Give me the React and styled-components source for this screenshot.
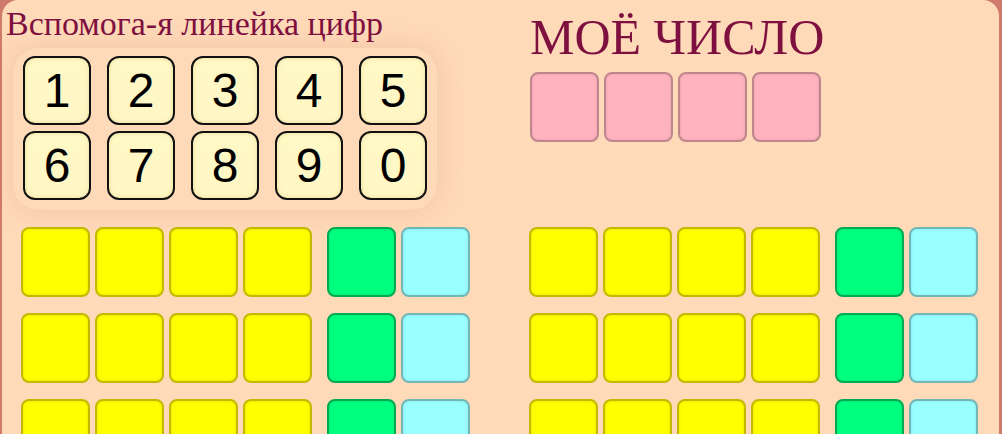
import React from 'react';
import styled, { createGlobalStyle } from 'styled-components';

const GlobalStyle = createGlobalStyle`
  html, body {
    margin: 0;
    padding: 0;
    background: #cf7a6c;
    overflow: hidden;
  }
`;

const Panel = styled.div`
  margin: 0 3px 0 2px;
  min-height: 520px;
  background: #ffdab9;
  border-radius: 16px;
  font-family: 'Liberation Serif', 'Times New Roman', serif;
`;

const Top = styled.div`
  display: flex;
  height: 227px;
`;

const LeftCol = styled.div`
  width: 524px;
  padding-left: 4px;
`;

const RightCol = styled.div`
  flex: 1;
`;

const Title = styled.h1`
  margin: 0;
  font-weight: normal;
  color: #7e1040;
  font-size: ${p => p.size}px;
  line-height: ${p => Math.round(p.size * 1.107)}px;
  padding-top: ${p => p.top}px;
  white-space: nowrap;
`;

const KeyPad = styled.div`
  display: grid;
  grid-template-columns: repeat(5, 68px);
  column-gap: 16px;
  row-gap: 6px;
  width: max-content;
  margin: 5px 0 0 7px;
  padding: 8px 10px 10px 10px;
  border-radius: 26px;
  box-shadow: 0 0 28px 2px rgba(185, 115, 75, 0.17);
`;

const Key = styled.div`
  height: 69px;
  box-sizing: border-box;
  display: flex;
  align-items: center;
  justify-content: center;
  border: 2px solid #111;
  border-radius: 12px;
  background: linear-gradient(#fff9c6, #fff6c4);
  box-shadow: inset 0 0 4px rgba(200, 170, 80, 0.35);
  font-family: 'Liberation Sans', Arial, sans-serif;
  font-size: 48px;
  color: #000;
`;

const Slots = styled.div`
  display: flex;
  gap: 5px;
  margin-top: 7px;
`;

const Cell = styled.div`
  width: 69px;
  height: 70px;
  box-sizing: border-box;
  border-radius: 8px;
  background: ${p => p.color};
  border: 2px solid ${p => p.edge};
  box-shadow: inset 0 0 3px rgba(0, 0, 0, 0.12);
`;

const Board = styled.div`
  display: flex;
  gap: 59px;
  padding-left: 19px;
`;

const Rows = styled.div`
  display: flex;
  flex-direction: column;
  gap: 16px;
`;

const Row = styled.div`
  display: flex;
  gap: 15px;
`;

const Group = styled.div`
  display: flex;
  gap: 5px;
`;

const YELLOW = { color: '#ffff00', edge: '#c6b800' };
const GREEN = { color: '#00ff7f', edge: '#00a952' };
const CYAN = { color: '#99ffff', edge: '#72b6b8' };
const PINK = { color: '#ffb3be', edge: '#c0868e' };

const Guess = () => (
  <Row>
    <Group>
      {[0, 1, 2, 3].map(i => <Cell key={i} {...YELLOW} />)}
    </Group>
    <Group>
      <Cell {...GREEN} />
      <Cell {...CYAN} />
    </Group>
  </Row>
);

const Column = () => (
  <Rows>
    <Guess />
    <Guess />
    <Guess />
  </Rows>
);

const digits = ['1', '2', '3', '4', '5', '6', '7', '8', '9', '0'];

const App = () => (
  <>
    <GlobalStyle />
    <Panel>
      <Top>
        <LeftCol>
          <Title size={34} top={5}>Вспомога-я линейка цифр</Title>
          <KeyPad>
            {digits.map(d => <Key key={d}>{d}</Key>)}
          </KeyPad>
        </LeftCol>
        <RightCol>
          <Title size={50} top={10}>МОЁ ЧИСЛО</Title>
          <Slots>
            {[0, 1, 2, 3].map(i => <Cell key={i} {...PINK} />)}
          </Slots>
        </RightCol>
      </Top>
      <Board>
        <Column />
        <Column />
      </Board>
    </Panel>
  </>
);

export default App;
